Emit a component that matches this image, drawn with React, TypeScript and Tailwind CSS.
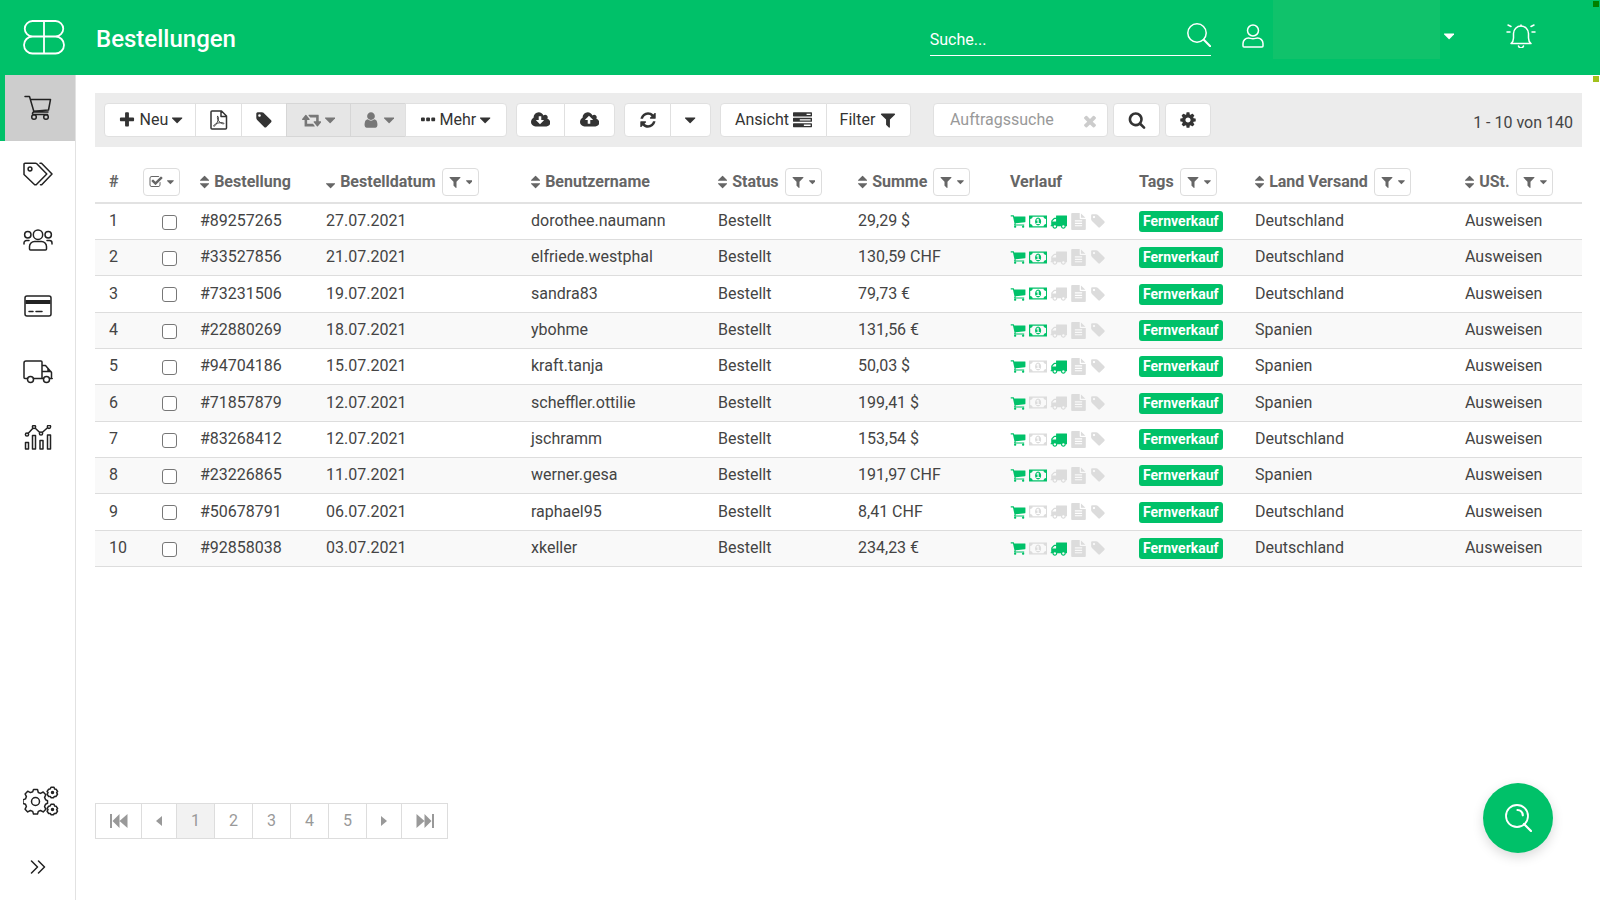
import React, { useState } from "react";

// [viewBox width, path] on a 1792 unit high grid
const GLYPHS = {
  plus: [
    1792,
    "M1600 736v192q0 40-28 68t-68 28h-416v416q0 40-28 68t-68 28h-192q-40 0-68-28t-28-68v-416h-416q-40 0-68-28t-28-68v-192q0-40 28-68t68-28h416v-416q0-40 28-68t68-28h192q40 0 68 28t28 68v416h416q40 0 68 28t28 68z",
  ],
  tag: [
    1792,
    "M576 448q0-53-37.5-90.5t-90.5-37.5-90.5 37.5-37.5 90.5 37.5 90.5 90.5 37.5 90.5-37.5 37.5-90.5zm1067 576q0 53-37 90l-491 492q-39 37-91 37-53 0-90-37l-715-716q-38-37-64.5-101t-26.5-117v-416q0-52 38-90t90-38h416q53 0 117 26.5t102 64.5l715 714q37 39 37 91z",
  ],
  retweet: [
    1920,
    "M1280 1504q0 13-9.5 22.5t-22.5 9.5h-960q-8 0-13.5-2t-9-7-5.5-8-3-11.5-1-11.5v-600h-192q-26 0-45-19t-19-45q0-24 15-41l320-384q19-22 49-22t49 22l320 384q15 17 15 41 0 26-19 45t-45 19h-192v384h576q16 0 25 11l160 192q7 10 7 21zm640-416q0 24-15 41l-320 384q-20 23-49 23t-49-23l-320-384q-15-17-15-41 0-26 19-45t45-19h192v-384h-576q-16 0-25-12l-160-192q-7-9-7-20 0-13 9.5-22.5t22.5-9.5h960q8 0 13.5 2t9 7 5.5 8 3 11.5 1 11.5v600h192q26 0 45 19t19 45z",
  ],
  user: [
    1792,
    "M1536 1399q0 109-62.5 187t-150.5 78h-854q-88 0-150.5-78t-62.5-187q0-85 8.5-160.5t31.5-152 58.5-131 94-89 134.5-34.5q131 128 313 128t313-128q76 0 134.5 34.5t94 89 58.5 131 31.5 152 8.5 160.5zm-256-887q0 159-112.5 271.5t-271.5 112.5-271.5-112.5-112.5-271.5 112.5-271.5 271.5-112.5 271.5 112.5 112.5 271.5z",
  ],
  dots: [
    1408,
    "M384 736v192q0 40-28 68t-68 28h-192q-40 0-68-28t-28-68v-192q0-40 28-68t68-28h192q40 0 68 28t28 68zm512 0v192q0 40-28 68t-68 28h-192q-40 0-68-28t-28-68v-192q0-40 28-68t68-28h192q40 0 68 28t28 68zm512 0v192q0 40-28 68t-68 28h-192q-40 0-68-28t-28-68v-192q0-40 28-68t68-28h192q40 0 68 28t28 68z",
  ],
  download: [
    1920,
    "M1280 928q0-14-9-23t-23-9h-224v-352q0-13-9.5-22.5t-22.5-9.5h-192q-13 0-22.5 9.5t-9.5 22.5v352h-224q-13 0-22.5 9.5t-9.5 22.5q0 14 9 23l352 352q9 9 23 9t23-9l351-351q10-12 10-24zm640 224q0 159-112.5 271.5t-271.5 112.5h-1088q-185 0-316.5-131.5t-131.5-316.5q0-130 70-240t188-165q-2-30-2-43 0-212 150-362t362-150q156 0 285.5 87t188.5 231q71-62 166-62 106 0 181 75t75 181q0 76-41 138 130 31 213.5 135.5t83.5 238.5z",
  ],
  upload: [
    1920,
    "M1280 864q0-14-9-23l-352-352q-9-9-23-9t-23 9l-351 351q-10 12-10 24 0 14 9 23t23 9h224v352q0 13 9.5 22.5t22.5 9.5h192q13 0 22.5-9.5t9.5-22.5v-352h224q13 0 22.5-9.5t9.5-22.5zm640 288q0 159-112.5 271.5t-271.5 112.5h-1088q-185 0-316.5-131.5t-131.5-316.5q0-130 70-240t188-165q-2-30-2-43 0-212 150-362t362-150q156 0 285.5 87t188.5 231q71-62 166-62 106 0 181 75t75 181q0 76-41 138 130 31 213.5 135.5t83.5 238.5z",
  ],
  refresh: [
    1792,
    "M1639 1056q0 5-1 7-64 268-268 434.5t-478 166.5q-146 0-282.5-55t-243.5-157l-129 129q-19 19-45 19t-45-19-19-45v-448q0-26 19-45t45-19h448q26 0 45 19t19 45-19 45l-137 137q71 66 161 102t187 36q134 0 250-65t186-179q11-17 53-117 8-23 30-23h192q13 0 22.5 9.5t9.5 22.5zm25-800v448q0 26-19 45t-45 19h-448q-26 0-45-19t-19-45 19-45l138-138q-148-137-349-137-134 0-250 65t-186 179q-11 17-53 117-8 23-30 23h-199q-13 0-22.5-9.5t-9.5-22.5v-7q65-268 270-434.5t480-166.5q146 0 284 55.5t245 156.5l130-129q19-19 45-19t45 19 19 45z",
  ],
  tasks: [
    1792,
    "M1024 1408h640v-128h-640v128zm-384-512h1024v-128h-1024v128zm640-512h384v-128h-384v128zm512 832v256q0 26-19 45t-45 19h-1664q-26 0-45-19t-19-45v-256q0-26 19-45t45-19h1664q26 0 45 19t19 45zm0-512v256q0 26-19 45t-45 19h-1664q-26 0-45-19t-19-45v-256q0-26 19-45t45-19h1664q26 0 45 19t19 45zm0-512v256q0 26-19 45t-45 19h-1664q-26 0-45-19t-19-45v-256q0-26 19-45t45-19h1664q26 0 45 19t19 45z",
  ],
  filter: [
    1792,
    "M1595 295q17 41-14 70l-493 493v742q0 42-39 59-13 5-25 5-27 0-45-19l-256-256q-19-19-19-45v-486l-493-493q-31-29-14-70 17-39 59-39h1280q42 0 59 39z",
  ],
  times: [
    1792,
    "M1490 1322q0 40-28 68l-136 136q-28 28-68 28t-68-28l-294-294-294 294q-28 28-68 28t-68-28l-136-136q-28-28-28-68t28-68l294-294-294-294q-28-28-28-68t28-68l136-136q28-28 68-28t68 28l294 294 294-294q28-28 68-28t68 28l136 136q28 28 28 68t-28 68l-294 294 294 294q28 28 28 68z",
  ],
  search: [
    1792,
    "M1216 832q0-185-131.5-316.5t-316.5-131.5-316.5 131.5-131.5 316.5 131.5 316.5 316.5 131.5 316.5-131.5 131.5-316.5zm512 832q0 52-38 90t-90 38q-54 0-90-38l-343-342q-179 124-399 124-143 0-273.5-55.5t-225-150-150-225-55.5-273.5 55.5-273.5 150-225 225-150 273.5-55.5 273.5 55.5 225 150 150 225 55.5 273.5q0 220-124 399l343 343q37 37 37 90z",
  ],
  cog: [
    1792,
    "M1152 896q0-106-75-181t-181-75-181 75-75 181 75 181 181 75 181-75 75-181zm512-109v222q0 12-8 23t-20 13l-185 28q-19 54-39 91 35 50 107 138 10 12 10 25t-9 23q-27 37-99 108t-94 71q-12 0-26-9l-138-108q-44 23-91 38-16 136-29 186-7 28-36 28h-222q-14 0-24.5-8.5t-11.5-21.5l-28-184q-49-16-90-37l-141 107q-10 9-25 9-14 0-25-11-126-114-165-168-7-10-7-23 0-12 8-23 15-21 51-66.5t54-70.5q-27-50-41-99l-183-27q-13-2-21-12.5t-8-23.5v-222q0-12 8-23t19-13l186-28q14-46 39-92-40-57-107-138-10-12-10-24 0-10 9-23 26-36 98.5-107.5t94.5-71.5q13 0 26 10l138 107q44-23 91-38 16-136 29-186 7-28 36-28h222q14 0 24.5 8.5t11.5 21.5l28 184q49 16 90 37l142-107q9-9 24-9 13 0 25 10 129 119 165 170 7 8 7 22 0 12-8 23-15 21-51 66.5t-54 70.5q26 50 41 98l183 28q13 2 21 12.5t8 23.5z",
  ],
  check: [
    1792,
    "M1472 930v318q0 119-84.5 203.5t-203.5 84.5h-832q-119 0-203.5-84.5t-84.5-203.5v-832q0-119 84.5-203.5t203.5-84.5h832q63 0 117 25 15 7 18 23 3 17-9 29l-49 49q-10 10-23 10-3 0-9-2-23-6-45-6h-832q-66 0-113 47t-47 113v832q0 66 47 113t113 47h832q66 0 113-47t47-113v-254q0-13 9-22l64-64q10-10 23-10 6 0 12 3 20 8 20 29zm231-489l-814 814q-24 24-57 24t-57-24l-430-430q-24-24-24-57t24-57l110-110q24-24 57-24t57 24l263 263 647-647q24-24 57-24t57 24l110 110q24 24 24 57t-24 57z",
  ],
  caret: [
    1024,
    "M1024 704q0 26-19 45l-448 448q-19 19-45 19t-45-19l-448-448q-19-19-19-45t19-45 45-19h896q26 0 45 19t19 45z",
  ],
  sort: [
    1024,
    "M1024 1088q0 26-19 45l-448 448q-19 19-45 19t-45-19l-448-448q-19-19-19-45t19-45 45-19h896q26 0 45 19t19 45zm0-384q0 26-19 45t-45 19h-896q-26 0-45-19t-19-45 19-45l448-448q19-19 45-19t45 19l448 448q19 19 19 45z",
  ],
  sortDesc: [
    1024,
    "M1024 1088q0 26-19 45l-448 448q-19 19-45 19t-45-19l-448-448q-19-19-19-45t19-45 45-19h896q26 0 45 19t19 45z",
  ],
  cart: [
    1792,
    "M704 1536q0 52-38 90t-90 38-90-38-38-90 38-90 90-38 90 38 38 90zm896 0q0 52-38 90t-90 38-90-38-38-90 38-90 90-38 90 38 38 90zm128-1088v512q0 24-16.5 42.5t-40.5 21.5l-1044 122q13 60 13 70 0 16-24 64h920q26 0 45 19t19 45-19 45-45 19h-1024q-26 0-45-19t-19-45q0-11 8-31.5t16-36 21.5-40 15.5-29.5l-177-823h-204q-26 0-45-19t-19-45 19-45 45-19h256q16 0 28.5 6.5t19.5 15.5 13 24.5 8 26 5.5 29.5 4.5 26h1201q26 0 45 19t19 45z",
  ],
  money: [
    1920,
    "M768 1152h384v-96h-128v-448h-114l-148 137 77 80q42-37 55-57h2v288h-128v96zm512-256q0 70-21 142t-59.5 134-101.5 101-138 39-138-39-101.5-101-59.5-134-21-142 21-142 59.5-134 101.5-101 138-39 138 39 101.5 101 59.5 134 21 142zm512 256v-512q-106 0-181-75t-75-181h-1152q0 106-75 181t-181 75v512q106 0 181 75t75 181h1152q0-106 75-181t181-75zm128-832v1152q0 26-19 45t-45 19h-1792q-26 0-45-19t-19-45v-1152q0-26 19-45t45-19h1792q26 0 45 19t19 45z",
  ],
  truck: [
    1792,
    "M640 1408q0-52-38-90t-90-38-90 38-38 90 38 90 90 38 90-38 38-90zm-384-512h384v-256h-158q-13 0-22 9l-195 195q-9 9-9 22v30zm1280 512q0-52-38-90t-90-38-90 38-38 90 38 90 90 38 90-38 38-90zm256-1088v1024q0 15-4 26.5t-13.5 18.5-16.5 11.5-23.5 6-22.5 2-25.5 0-22.5-.5q0 106-75 181t-181 75-181-75-75-181h-384q0 106-75 181t-181 75-181-75-75-181h-64q-3 0-22.5.5t-25.5 0-22.5-2-23.5-6-16.5-11.5-13.5-18.5-4-26.5q0-26 19-45t45-19v-320q0-8-.5-35t0-38 2.5-34.5 6.5-37 14-30.5 22.5-30l198-198q19-19 50.5-32t58.5-13h160v-192q0-26 19-45t45-19h1024q26 0 45 19t19 45z",
  ],
  file: [
    1792,
    "M1596 476q14 14 28 36h-472v-472q22 14 36 28zm-476 164h544v1056q0 40-28 68t-68 28h-1344q-40 0-68-28t-28-68v-1600q0-40 28-68t68-28h800v544q0 40 28 68t68 28zm160 736v-64q0-14-9-23t-23-9h-704q-14 0-23 9t-9 23v64q0 14 9 23t23 9h704q14 0 23-9t9-23zm0-256v-64q0-14-9-23t-23-9h-704q-14 0-23 9t-9 23v64q0 14 9 23t23 9h704q14 0 23-9t9-23zm0-256v-64q0-14-9-23t-23-9h-704q-14 0-23 9t-9 23v64q0 14 9 23t23 9h704q14 0 23-9t9-23z",
  ],
} as const;

interface GlyphProps {
  name: keyof typeof GLYPHS;
  className?: string;
}

function Glyph({ name, className = "h-[18px]" }: GlyphProps) {
  const [width, path] = GLYPHS[name];
  return (
    <svg
      viewBox={`0 0 ${width} 1792`}
      className={`w-auto shrink-0 ${className}`}
      fill="currentColor"
      aria-hidden="true"
    >
      <path d={path} />
    </svg>
  );
}

interface LineProps {
  viewBox: string;
  className: string;
  strokeWidth?: number;
  children: React.ReactNode;
}

function Line({ viewBox, className, strokeWidth = 1.5, children }: LineProps) {
  return (
    <svg
      viewBox={viewBox}
      className={className}
      fill="none"
      stroke="currentColor"
      strokeWidth={strokeWidth}
      strokeLinecap="round"
      strokeLinejoin="round"
      aria-hidden="true"
    >
      {children}
    </svg>
  );
}

const PdfIcon = () => (
  <Line viewBox="0 0 18 20" className="h-5 w-[18px]">
    <path d="M2 1h9.500l5 5v12a1 1 0 0 1-1 1H2a1 1 0 0 1-1-1V2a1 1 0 0 1 1-1zM11 1v5.500h5.500" />
    <path
      d="M7.500 6.500c1.500-.5 1 2 .6 3.500C7.200 13 5 16.500 3.800 16.300c-1-.6 1.500-2.800 5-3.400 2.500-.5 5.200-.3 5.200.5-.3 1-3 .1-4.400-1.400C8 10.400 6.800 7.500 7.500 6.500z"
      strokeWidth="0.9"
    />
  </Line>
);

const SmallGear = ({ x, y }: { x: number; y: number }) => (
  <g transform={`translate(${x} ${y})`}>
    <path d="M-1.500-5.200h3l.6 1.600 1.600.4 1.400 2.200-1 1.200.9 1.500-1.600 2.300-1.600-.1-.7 1.300h-2.600l-.7-1.300-1.600.1-1.600-2.300 1-1.500-1-1.200 1.400-2.200 1.600-.4z" />
    <circle r="1" fill="currentColor" />
  </g>
);

const NAV = [
  {
    label: "Bestellungen",
    icon: (
      <Line viewBox="0 0 28 26" className="h-[26px] w-7">
        <path d="M1 1.500h4.500l4.500 15.500h14M6.500 4.500h20l-2 10.500-15 1.200M10 17c-2 .5-2 2-.5 2.500h14" />
        <circle cx="10" cy="22" r="2.300" />
        <circle cx="22" cy="22" r="2.300" />
      </Line>
    ),
  },
  {
    label: "Artikel",
    icon: (
      <Line viewBox="0 0 30 24" className="h-6 w-[30px]">
        <path d="M2 1.200h10.500a2 2 0 0 1 1.300.5L23.800 12 13.200 22.800h-1.500L1 12.500v-10.300a1 1 0 0 1 1-1z" />
        <path d="M17 1.200h1.500L29 12 18.700 22.800H17.500" />
        <circle cx="7" cy="7" r="1.900" />
      </Line>
    ),
  },
  {
    label: "Kunden",
    icon: (
      <Line viewBox="0 0 30 22" className="h-[22px] w-[30px]">
        <circle cx="15" cy="5.700" r="4.700" />
        <circle cx="4.800" cy="5.800" r="3.200" />
        <circle cx="25.200" cy="5.800" r="3.200" />
        <path d="M6.500 20v-2.500a5 5 0 0 1 5-5h7a5 5 0 0 1 5 5V20a1 1 0 0 1-1 1h-15a1 1 0 0 1-1-1zM1 15v-1a2.500 2.500 0 0 1 2.500-2.500H6M29 15v-1a2.500 2.500 0 0 0-2.500-2.500H24" />
      </Line>
    ),
  },
  {
    label: "Zahlungen",
    icon: (
      <Line viewBox="0 0 28 22" className="h-[22px] w-7">
        <rect x="1" y="1" width="26" height="20" rx="2" />
        <path d="M1.500 7h25" strokeWidth="4" strokeLinecap="butt" />
        <path d="M5 16.500h4M12 16.500h6" />
      </Line>
    ),
  },
  {
    label: "Versand",
    icon: (
      <Line viewBox="0 0 30 24" className="h-6 w-[30px]">
        <path d="M4.500 18.500H2a1 1 0 0 1-1-1V3a2 2 0 0 1 2-2h15a1 1 0 0 1 1 1v16.500H10.500M19 5.500h3.500l6 7v6M19 11.500h9M25 8.500v3M19 18.500h1.500M27 18.500h2.200" />
        <circle cx="7.500" cy="19.500" r="3" />
        <circle cx="23.500" cy="19.500" r="3" />
      </Line>
    ),
  },
  {
    label: "Statistik",
    icon: (
      <Line viewBox="0 1 28 26" className="h-[26px] w-7">
        <path d="M1.500 18.500h3V25h-3zM8.500 11.500h3V25h-3zM16 16.500h3V25h-3zM23.500 11h3v14h-3zM4.300 9.200l4.600-5M11.300 4.200l4.200 4M18.500 8.200l5-4.500" />
        <circle cx="3" cy="10.500" r="1.600" />
        <circle cx="10" cy="3" r="1.600" />
        <circle cx="17" cy="9.500" r="1.600" />
        <circle cx="25" cy="2.800" r="1.600" />
      </Line>
    ),
  },
];

const TOOL =
  "flex h-[34px] items-center justify-center gap-1 border border-[#e0e0e0] bg-white text-[#333]";
const TOOL_OFF =
  "flex h-[34px] items-center justify-center gap-1 border border-[#d6d6d6] bg-[#e6e6e6] text-[#777]";
const MINI =
  "flex h-7 w-[37px] items-center justify-center gap-1 rounded-sm border border-[#ddd] bg-white text-[#666]";

interface Column {
  title: string;
  sort?: "sort" | "sortDesc";
  filter?: boolean;
  width: string;
}

const COLUMNS: Column[] = [
  { title: "Bestellung", sort: "sort", width: "w-[126px]" },
  { title: "Bestelldatum", sort: "sortDesc", filter: true, width: "w-[205px]" },
  { title: "Benutzername", sort: "sort", width: "w-[187px]" },
  { title: "Status", sort: "sort", filter: true, width: "w-[140px]" },
  { title: "Summe", sort: "sort", filter: true, width: "w-[152px]" },
  { title: "Verlauf", width: "w-[129px]" },
  { title: "Tags", filter: true, width: "w-[116px]" },
  { title: "Land Versand", sort: "sort", filter: true, width: "w-[210px]" },
  { title: "USt.", sort: "sort", filter: true, width: "w-auto" },
];

interface Order {
  id: string;
  date: string;
  user: string;
  sum: string;
  paid: boolean;
  shipped: boolean;
  country: string;
}

const order = (
  id: string,
  date: string,
  user: string,
  sum: string,
  paid: boolean,
  shipped: boolean,
  country: string
): Order => ({ id, date, user, sum, paid, shipped, country });

const ORDERS: Order[] = [
  order("#89257265", "27.07.2021", "dorothee.naumann", "29,29 $", true, true, "Deutschland"),
  order("#33527856", "21.07.2021", "elfriede.westphal", "130,59 CHF", true, false, "Deutschland"),
  order("#73231506", "19.07.2021", "sandra83", "79,73 €", true, false, "Deutschland"),
  order("#22880269", "18.07.2021", "ybohme", "131,56 €", true, false, "Spanien"),
  order("#94704186", "15.07.2021", "kraft.tanja", "50,03 $", false, true, "Spanien"),
  order("#71857879", "12.07.2021", "scheffler.ottilie", "199,41 $", false, false, "Spanien"),
  order("#83268412", "12.07.2021", "jschramm", "153,54 $", false, true, "Deutschland"),
  order("#23226865", "11.07.2021", "werner.gesa", "191,97 CHF", true, false, "Spanien"),
  order("#50678791", "06.07.2021", "raphael95", "8,41 CHF", false, false, "Deutschland"),
  order("#92858038", "03.07.2021", "xkeller", "234,23 €", false, true, "Deutschland"),
];

function Header() {
  return (
    <header className="relative flex h-[75px] items-center bg-[#00c169] text-white">
      <a href="#" aria-label="Startseite" className="flex w-[87px] justify-center">
        <Line viewBox="0 0 42 35" className="h-[35px] w-[42px]" strokeWidth={1.8}>
          <path d="M9.500 1h23a7.700 7.700 0 0 1 0 15.500 8.400 8.400 0 0 1 0 17H9.500a8.400 8.400 0 0 1 0-17A7.700 7.700 0 0 1 9.500 1zM21 1v32.500M9.500 16.500h23" />
        </Line>
      </a>
      <h1 className="ml-[9px] flex-1 pt-0.5 text-2xl font-medium">Bestellungen</h1>

      <div className="flex h-9 w-[281px] items-center border-b border-white">
        <input
          type="text"
          aria-label="Suche"
          placeholder="Suche..."
          className="mt-1.5 h-6 min-w-0 flex-1 bg-transparent text-base outline-none placeholder:text-white"
        />
        <button aria-label="Suchen">
          <Line viewBox="0 0 24 24" className="mb-1 h-6 w-6">
            <circle cx="10" cy="10" r="9.200" />
            <path d="M16.800 16.800l6.400 6.400" strokeWidth="2" />
          </Line>
        </button>
      </div>

      <button
        aria-label="Benutzerkonto"
        className="ml-[31px] flex h-full items-center"
      >
        <Line viewBox="0 0 22 24" className="mb-1 h-6 w-[22px]">
          <circle cx="11" cy="6.500" r="5.500" />
          <path d="M1 22v-2.500A5.500 5.500 0 0 1 6.500 14c1.500 0 2.500.8 4.500.8s3-.8 4.500-.8a5.500 5.500 0 0 1 5.500 5.500V22a1 1 0 0 1-1 1H2a1 1 0 0 1-1-1z" />
        </Line>
        <span className="ml-[9px] h-[59px] w-[167px] self-start bg-[#10c26b]" />
        <Glyph name="caret" className="mb-1 ml-1 h-[18px]" />
      </button>
      <button aria-label="Benachrichtigungen" className="mr-16 mb-1 ml-[52px]">
        <Line viewBox="0 0 30 24" className="h-6 w-[30px]">
          <path d="M5 19.500c2-1.500 2.500-3 2.500-5.500v-4.500a7.500 7.500 0 0 1 15 0V14c0 2.500.5 4 2.500 5.500z" />
          <path d="M12.500 22a2.600 2.600 0 0 0 5 0M15 1v1M1 8h3M26 8h3M2 1l3 1.500M28 1l-3 1.500" />
        </Line>
      </button>
      <span className="absolute top-px right-px size-1.5 bg-[#008000]" />
      <span className="absolute top-[76px] right-px size-1.5 bg-[#a2c11c]" />
    </header>
  );
}

function Sidebar() {
  return (
    <nav className="flex w-[76px] shrink-0 flex-col border-r border-[#e2e2e2] text-[#222]">
      {NAV.map(({ label, icon }, i) => (
        <a
          key={label}
          href="#"
          aria-label={label}
          className={`flex h-[66px] items-center justify-center border-l-[5px] pr-[5px] ${
            i === 0 ? "border-[#00c169] bg-[#cdcdcd]" : "border-transparent"
          }`}
        >
          {icon}
        </a>
      ))}
      <a
        href="#"
        aria-label="Einstellungen"
        className="mt-auto flex h-[66px] items-center justify-center pl-1.5"
      >
        <Line viewBox="0 0 36 30" className="h-[30px] w-9">
          <path d="M10.500 3.500h4l.8 3 2.200.9 2.700-1.400 2.600 2.700-1.200 2.700 1 2.400 1.900.8v2.800l-2 .9-.9 2.300 1.200 2.600-2.600 2.700-2.700-1.400-2.200.9-.8 2.700h-4l-.8-2.700-2.300-.9-2.700 1.400-2.600-2.700 1.300-2.700-.9-2.200-2.500-.9v-3.600l2.500-.9.9-2.300-1.300-2.700 2.600-2.700 2.700 1.400 2.300-.9z" />
          <circle cx="12.500" cy="15.500" r="4" />
          <SmallGear x={29.500} y={6.500} />
          <SmallGear x={29.500} y={23.500} />
        </Line>
      </a>
      <button
        aria-label="Menü ausklappen"
        className="flex h-[66px] items-center justify-center"
      >
        <Line viewBox="0 0 16 14" className="h-3.5 w-4">
          <path d="M1.500 1l6 6-6 6M8.500 1l6 6-6 6" />
        </Line>
      </button>
    </nav>
  );
}

function Toolbar() {
  return (
    <div className="flex h-[54px] items-center bg-[#ececec] px-[9px] text-base">
      <div className="flex -space-x-px">
        <button className={`${TOOL} w-[92px] rounded-l-sm`}>
          <Glyph name="plus" />
          Neu
          <Glyph name="caret" />
        </button>
        <button aria-label="PDF" className={`${TOOL} w-[47px]`}>
          <PdfIcon />
        </button>
        <button aria-label="Tags" className={`${TOOL} w-[46px]`}>
          <Glyph name="tag" />
        </button>
        <button aria-label="Status ändern" disabled className={`${TOOL_OFF} w-[65px]`}>
          <Glyph name="retweet" />
          <Glyph name="caret" />
        </button>
        <button aria-label="Bearbeiter" disabled className={`${TOOL_OFF} w-[56px]`}>
          <Glyph name="user" />
          <Glyph name="caret" />
        </button>
        <button className={`${TOOL} w-[102px] rounded-r-sm`}>
          <Glyph name="dots" />
          Mehr
          <Glyph name="caret" />
        </button>
      </div>

      <div className="ml-[9px] flex -space-x-px">
        <button aria-label="Exportieren" className={`${TOOL} w-[49px] rounded-l-sm`}>
          <Glyph name="download" />
        </button>
        <button aria-label="Importieren" className={`${TOOL} w-[51px] rounded-r-sm`}>
          <Glyph name="upload" />
        </button>
      </div>

      <div className="ml-[9px] flex -space-x-px">
        <button aria-label="Aktualisieren" className={`${TOOL} w-[47px] rounded-l-sm`}>
          <Glyph name="refresh" />
        </button>
        <button aria-label="Intervall" className={`${TOOL} w-[41px] rounded-r-sm`}>
          <Glyph name="caret" />
        </button>
      </div>

      <div className="ml-[9px] flex -space-x-px">
        <button className={`${TOOL} w-[107px] rounded-l-sm`}>
          Ansicht
          <Glyph name="tasks" className="h-[19px]" />
        </button>
        <button className={`${TOOL} w-[85px] rounded-r-sm`}>
          Filter
          <Glyph name="filter" />
        </button>
      </div>

      <div className="ml-[22px] flex h-[34px] w-[175px] items-center rounded-sm border border-[#e0e0e0] bg-white pr-2 pl-4">
        <input
          type="text"
          aria-label="Auftragssuche"
          placeholder="Auftragssuche"
          className="min-w-0 flex-1 bg-transparent outline-none placeholder:text-[#999]"
        />
        <button aria-label="Suche leeren" className="mt-0.5 text-[#ccc]">
          <Glyph name="times" />
        </button>
      </div>
      <button aria-label="Suchen" className={`${TOOL} ml-[5px] w-[47px] rounded-sm`}>
        <Glyph name="search" />
      </button>
      <button aria-label="Optionen" className={`${TOOL} ml-[5px] w-[46px] rounded-sm`}>
        <Glyph name="cog" />
      </button>
      <span className="mt-1.5 ml-auto text-[#444]">1 - 10 von 140</span>
    </div>
  );
}

const state = (active: boolean) => (active ? "text-[#00c169]" : "text-[#dcdcdc]");

function OrderTable() {
  return (
    <table className="mt-3.5 w-full table-fixed text-left text-base text-[#444]">
      <thead className="text-[#666]">
        <tr className="h-[42px] border-b-2 border-[#e2e2e2]">
          <th className="w-12 pl-3.5 font-bold">#</th>
          <th className="w-[57px]">
            <button aria-label="Auswahl" className={MINI}>
              <Glyph name="check" className="h-3.5" />
              <Glyph name="caret" className="h-3" />
            </button>
          </th>
          {COLUMNS.map(({ title, sort, filter, width }) => (
            <th key={title} className={`font-bold whitespace-nowrap ${width}`}>
              <div className="flex items-center">
                {sort && <Glyph name={sort} className="mr-[5px] h-4" />}
                {title}
                {filter && (
                  <button aria-label={`${title} filtern`} className={`${MINI} ml-1.5`}>
                    <Glyph name="filter" className="h-3.5" />
                    <Glyph name="caret" className="h-3" />
                  </button>
                )}
              </div>
            </th>
          ))}
        </tr>
      </thead>
      <tbody>
        {ORDERS.map((o, i) => (
          <tr
            key={o.id}
            className="h-9 border-b border-[#ddd] even:bg-[#f9f9f9] nth-[3n]:h-[37px]"
          >
            <td className="pl-3.5">{i + 1}</td>
            <td className="pl-[19px]">
              <input
                type="checkbox"
                aria-label={`Bestellung ${o.id} auswählen`}
                className="mt-0.5 block size-[15px] appearance-none rounded-[3px] border border-[#777] bg-white checked:bg-[#00c169]"
              />
            </td>
            <td>{o.id}</td>
            <td>{o.date}</td>
            <td>{o.user}</td>
            <td>Bestellt</td>
            <td>{o.sum}</td>
            <td>
              <div className="flex items-center gap-[3px]">
                <Glyph name="cart" className={`h-4 ${state(true)}`} />
                <Glyph name="money" className={`h-[17px] ${state(o.paid)}`} />
                <Glyph name="truck" className={`h-[17px] ${state(o.shipped)}`} />
                <Glyph name="file" className={`h-[17px] ${state(false)}`} />
                <Glyph name="tag" className={`h-4 ${state(false)}`} />
              </div>
            </td>
            <td>
              <span className="mt-0.5 inline-block h-[21px] rounded-[3px] bg-[#00c169] px-1 text-sm leading-[21px] font-bold text-white">
                Fernverkauf
              </span>
            </td>
            <td>{o.country}</td>
            <td>Ausweisen</td>
          </tr>
        ))}
      </tbody>
    </table>
  );
}

const PAGE =
  "flex h-[36px] items-center justify-center border border-[#ddd] text-[#999]";

function Pagination() {
  const [page, setPage] = useState(1);

  return (
    <div className="mt-auto mb-[61px] flex -space-x-px">
      <button aria-label="Erste Seite" className={`${PAGE} w-[47px]`} onClick={() => setPage(1)}>
        <svg viewBox="0 0 18 14" className="h-3.5 w-[18px]" fill="currentColor">
          <path d="M0 0h2v14H0zM9.500 0v14L2.500 7zM17.500 0v14L9.500 7z" />
        </svg>
      </button>
      <button
        aria-label="Vorherige Seite"
        className={`${PAGE} w-[36px]`}
        onClick={() => setPage(Math.max(1, page - 1))}
      >
        <svg viewBox="0 0 6 10" className="h-2.5 w-1.5" fill="currentColor">
          <path d="M6 0v10L0 5z" />
        </svg>
      </button>
      {[1, 2, 3, 4, 5].map((n) => (
        <button
          key={n}
          className={`${PAGE} w-[39px] ${n === page ? "bg-[#f2f2f2]" : "bg-white"}`}
          onClick={() => setPage(n)}
        >
          {n}
        </button>
      ))}
      <button
        aria-label="Nächste Seite"
        className={`${PAGE} w-[36px]`}
        onClick={() => setPage(Math.min(5, page + 1))}
      >
        <svg viewBox="0 0 6 10" className="h-2.5 w-1.5" fill="currentColor">
          <path d="M0 0v10l6-5z" />
        </svg>
      </button>
      <button aria-label="Letzte Seite" className={`${PAGE} w-[47px]`} onClick={() => setPage(5)}>
        <svg viewBox="0 0 18 14" className="h-3.5 w-[18px]" fill="currentColor">
          <path d="M16 0h2v14h-2zM8.500 0v14l7-7zM.5 0v14l8-7z" />
        </svg>
      </button>
    </div>
  );
}

function App() {
  return (
    <div className="flex min-h-screen flex-col bg-white font-[Roboto,sans-serif]">
      <Header />
      <div className="flex flex-1">
        <Sidebar />
        <main className="flex min-w-0 flex-1 flex-col pt-[18px] pr-[18px] pl-[19px]">
          <Toolbar />
          <OrderTable />
          <Pagination />
        </main>
      </div>
      <button
        aria-label="Schnellsuche"
        className="fixed right-[47px] bottom-[47px] flex size-[70px] items-center justify-center rounded-full bg-[#00c169] text-white shadow-[0_4px_12px_rgba(0,0,0,0.15)]"
      >
        <Line viewBox="0 0 27 28" className="h-7 w-[27px]" strokeWidth={1.8}>
          <circle cx="12" cy="12" r="11" />
          <path d="M19 20l7 7M12.500 6a5.500 5.500 0 0 1 5.300 5.300" strokeWidth="2.200" />
        </Line>
      </button>
    </div>
  );
}

export default App;
